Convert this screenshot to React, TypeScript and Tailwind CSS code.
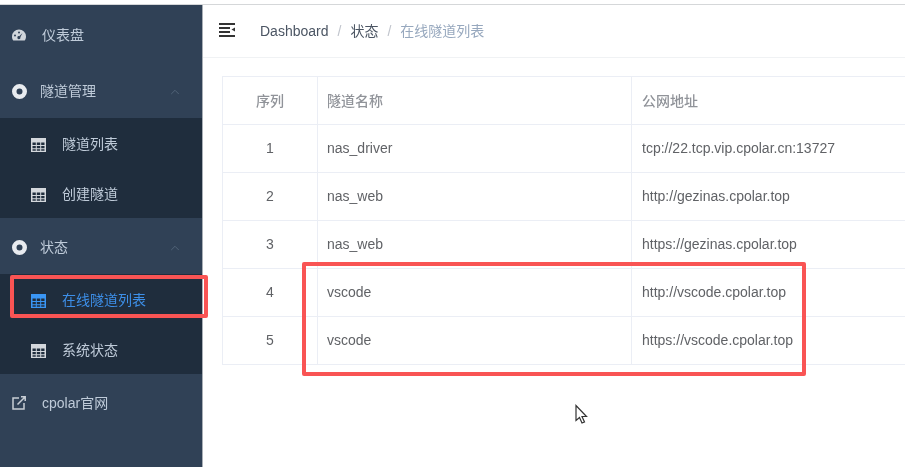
import React from 'react';
import { ChevronUp } from 'lucide-react';

interface Row {
  id: number;
  name: string;
  url: string;
}

const rows: Row[] = [
  { id: 1, name: 'nas_driver', url: 'tcp://22.tcp.vip.cpolar.cn:13727' },
  { id: 2, name: 'nas_web', url: 'http://gezinas.cpolar.top' },
  { id: 3, name: 'nas_web', url: 'https://gezinas.cpolar.top' },
  { id: 4, name: 'vscode', url: 'http://vscode.cpolar.top' },
  { id: 5, name: 'vscode', url: 'https://vscode.cpolar.top' },
];

const TableIcon = ({ className }: { className: string }) => (
  <svg viewBox="0 0 15 14" className={className} fill="currentColor">
    <path d="M0 0h15v14H0z M1.500 4.500v2.500h3.300v-2.500z M5.800 4.500v2.500h3.400v-2.500z M10.200 4.500v2.500h3.300v-2.500z M1.500 8v2.300h3.300v-2.300z M5.800 8v2.300h3.400v-2.300z M10.200 8v2.300h3.300v-2.300z M1.500 11.300v1.400h3.300v-1.400z M5.800 11.300v1.400h3.400v-1.400z M10.200 11.300v1.400h3.300v-1.400z" fillRule="evenodd" />
  </svg>
);

const DotCircle = () => (
  <svg viewBox="0 0 15 15" className="w-[15px] h-[15px] text-[#e8ebef]" fill="currentColor">
    <path fillRule="evenodd" d="M7.500 0a7.500 7.500 0 1 1 0 15 7.500 7.500 0 0 1 0-15z M7.500 4.500a3 3 0 1 0 0 6 3 3 0 0 0 0-6z" />
  </svg>
);

const Gauge = () => (
  <svg viewBox="0 0 14 12" className="w-[14px] h-[12px] text-[#d0d5db]" fill="currentColor">
    <path fillRule="evenodd" d="M7 0.500a7 7 0 0 1 7 7c0 1.600-.5 3-1.300 4H1.300C.5 10.500 0 9.100 0 7.500a7 7 0 0 1 7-7z M3 5.500a1 1 0 1 0 0 2 1 1 0 0 0 0-2z M7 2.500a1 1 0 1 0 0 2 1 1 0 0 0 0-2z M10.500 4L7.300 7.200a1.500 1.500 0 1 0 1 1z" />
  </svg>
);

const ExternalLink = () => (
  <svg viewBox="0 0 14 14" className="w-[14px] h-[14px] text-[#c8ced5]" fill="none" stroke="currentColor" strokeWidth="1.500">
    <path d="M7 2H1v11h11V7" />
    <path d="M5.500 8.500L13 1 M9 .8h4.200V5" />
  </svg>
);

const SubItem = ({ label, active }: { label: string; active?: boolean }) => (
  <div className={`h-[50px] flex items-center pl-[31px] pt-[3px] ${active ? 'text-[#3d8fe8]' : 'text-[#bfcbd9]'}`}>
    <TableIcon className={`w-[15px] h-[14px] ${active ? 'text-[#3a96f5]' : 'text-[#d3d7dc]'}`} />
    <span className="ml-[16px] text-[14px]">{label}</span>
  </div>
);

const GroupTitle = ({ label }: { label: string }) => (
  <div className="h-[56px] flex items-center pl-[12px] pr-[20px] pt-[3px] text-[#bfcbd9]">
    <DotCircle />
    <span className="ml-[13px] text-[14px] flex-1">{label}</span>
    <ChevronUp className="w-[14px] h-[14px] text-[#55677c]" strokeWidth={1.5} />
  </div>
);

const App: React.FC = () => {
  return (
    <div className="relative w-[905px] h-[467px] overflow-hidden bg-white blur-[0.5px] font-['Liberation_Sans','Noto_Sans_CJK_SC',sans-serif]">
      <div className="h-[5px] border-b border-[#d5d7d9]" />
      <div className="flex h-[462px]">
        <aside className="w-[203px] shrink-0 bg-[#304156] border-r border-[#a9afb6]">
          <div className="h-[57px] flex items-center pl-[12px] pt-[3px] text-[#bfcbd9]">
            <Gauge />
            <span className="ml-[16px] text-[14px]">仪表盘</span>
          </div>
          <GroupTitle label="隧道管理" />
          <div className="bg-[#1f2d3d]">
            <SubItem label="隧道列表" />
            <SubItem label="创建隧道" />
          </div>
          <GroupTitle label="状态" />
          <div className="bg-[#1f2d3d]">
            <SubItem label="在线隧道列表" active />
            <SubItem label="系统状态" />
          </div>
          <div className="h-[56px] flex items-center pl-[12px] pt-[2px] text-[#bfcbd9]">
            <ExternalLink />
            <span className="ml-[16px] text-[14px]">cpolar官网</span>
          </div>
        </aside>

        <main className="flex-1 min-w-0">
          <header className="h-[53px] border-b border-[#f0f2f4] flex items-center pl-[16px] text-[14px]">
            <svg viewBox="0 0 16 14" className="w-[16px] h-[14px] mb-[3px] text-[#333]" fill="currentColor">
              <path d="M0 0h16v2H0z M0 4h11v2H0z M0 8h11v2H0z M0 12h16v2H0z M16 4.500v4l-3.500-2z" />
            </svg>
            <span className="ml-[25px] text-[#4b5563]">Dashboard</span>
            <span className="mx-[9px] text-[#c0c4cc]">/</span>
            <span className="text-[#4b5563]">状态</span>
            <span className="mx-[9px] text-[#c0c4cc]">/</span>
            <span className="text-[#97a8be]">在线隧道列表</span>
          </header>

          <div className="pl-[19px] pt-[18px]">
            <table className="w-[700px] table-fixed border-collapse text-[14px] text-[#606266]">
              <thead>
                <tr className="h-[48px] text-[#909399]">
                  <th className="w-[95px] border border-[#ebeef5] font-medium pt-[2px]">序列</th>
                  <th className="w-[314px] border border-[#ebeef5] font-medium text-left pl-[9px] pt-[2px]">隧道名称</th>
                  <th className="border border-[#ebeef5] border-r-0 font-medium text-left pl-[10px] pt-[2px]">公网地址</th>
                </tr>
              </thead>
              <tbody>
                {rows.map((row) => (
                  <tr key={row.id} className="h-[48px]">
                    <td className="border border-[#ebeef5] text-center">{row.id}</td>
                    <td className="border border-[#ebeef5] pl-[9px]">{row.name}</td>
                    <td className="border border-[#ebeef5] border-r-0 pl-[10px] whitespace-nowrap">{row.url}</td>
                  </tr>
                ))}
              </tbody>
            </table>
          </div>
        </main>
      </div>

      {/* annotations drawn over the screenshot */}
      <div className="absolute left-[10px] top-[275px] w-[198px] h-[43px] border-[4px] border-[#f95454] rounded-[2px]" />
      <div className="absolute left-[302px] top-[262px] w-[504px] h-[114px] border-[4px] border-[#f95454] rounded-[2px]" />

      <svg viewBox="0 0 13 20" className="absolute left-[575px] top-[404px] w-[13px] h-[21px]" fill="white" stroke="#333" strokeWidth="1.2">
        <path d="M1 1v15l3.500-3 2.500 5.500 2.500-1-2.500-5.500h4.500z" />
      </svg>
    </div>
  );
};

export default App;
